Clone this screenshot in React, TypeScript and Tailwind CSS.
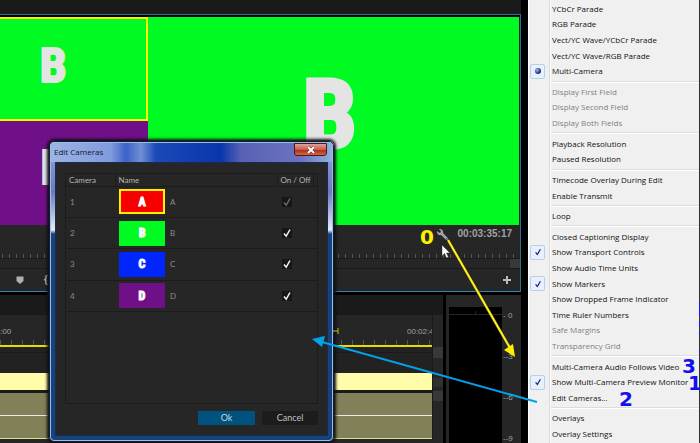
import { FaWrench } from "react-icons/fa";

type MenuEntry = {
  label: string;
  mark?: "check" | "dot";
  disabled?: boolean;
};

const menuGroups: MenuEntry[][] = [
  [
    { label: "YCbCr Parade" },
    { label: "RGB Parade" },
    { label: "Vect/YC Wave/YCbCr Parade" },
    { label: "Vect/YC Wave/RGB Parade" },
    { label: "Multi-Camera", mark: "dot" },
  ],
  [
    { label: "Display First Field", disabled: true },
    { label: "Display Second Field", disabled: true },
    { label: "Display Both Fields", disabled: true },
  ],
  [{ label: "Playback Resolution" }, { label: "Paused Resolution" }],
  [{ label: "Timecode Overlay During Edit" }, { label: "Enable Transmit" }],
  [{ label: "Loop" }],
  [
    { label: "Closed Captioning Display" },
    { label: "Show Transport Controls", mark: "check" },
    { label: "Show Audio Time Units" },
    { label: "Show Markers", mark: "check" },
    { label: "Show Dropped Frame Indicator" },
    { label: "Time Ruler Numbers" },
    { label: "Safe Margins", disabled: true },
    { label: "Transparency Grid", disabled: true },
  ],
  [
    { label: "Multi-Camera Audio Follows Video" },
    { label: "Show Multi-Camera Preview Monitor", mark: "check" },
    { label: "Edit Cameras..." },
  ],
  [{ label: "Overlays" }, { label: "Overlay Settings" }],
];

const cameras = [
  { id: 1, name: "A", tile: "bg-[#f80000] border-2 border-[#fff200]", locked: true },
  { id: 2, name: "B", tile: "bg-[#00fb22]", locked: false },
  { id: 3, name: "C", tile: "bg-[#0026fb]", locked: false },
  { id: 4, name: "D", tile: "bg-[#701088]", locked: false },
];

const heavy =
  "font-['Impact','Noto_Sans_ExtraCondensed','Roboto_Condensed','Open_Sans_Condensed','DejaVu_Sans_Mono',monospace] font-bold text-[#e4e4e4]";

function CheckIcon({ className }: { className: string }) {
  return (
    <svg viewBox="0 0 10 10" className={className} fill="none" stroke="currentColor">
      <path d="M2 5.5 L4.2 8.2 L8 1.5" strokeWidth="1.5" />
    </svg>
  );
}

function Monitor() {
  return (
    <section className="flex flex-col border-y border-r border-b-[#3186b4] border-r-[#2b6f94] border-t-[#2b6f94] bg-[#262626]">
      <div className="grid h-[210px] grid-cols-[2fr_5fr] border-t-2 border-black pr-px">
        <div className="grid grid-rows-2">
          <div className={`${heavy} flex justify-center border-y-2 border-r-2 border-[#fff200] bg-[#00fb22] pr-10 pt-5 text-[48px] leading-[54px] [-webkit-text-stroke:2px_#e4e4e4]`}>
            B
          </div>
          <div className={`${heavy} flex justify-center bg-[#701088] pr-10 pt-5 text-[48px] leading-[54px] [-webkit-text-stroke:2px_#e4e4e4]`}>
            D
          </div>
        </div>
        <div className={`${heavy} flex justify-center bg-[#00fb22] pr-2 pt-12 text-[96px] leading-[100px] [-webkit-text-stroke:4px_#e4e4e4]`}>
          B
        </div>
      </div>

      <div className="flex h-[25px] items-start justify-end gap-[10px] pr-2 pt-1 text-[#a2a2a2]">
        <button aria-label="Settings" className="-scale-x-100">
          <FaWrench size={11} />
        </button>
        <span className="font-['Liberation_Sans',sans-serif] text-[10px] font-bold leading-[10px]">00:03:35:17</span>
      </div>
      <div className="flex h-[9px] items-end border-b border-[#1a1a1a]">
        <div className="h-1 w-full bg-[repeating-linear-gradient(90deg,transparent_0_2px,#555_2px_3px,transparent_3px_7px)]" />
      </div>
      <div className="flex h-[10px] justify-end border-b border-[#1a1a1a]">
        <div className="w-[10px] bg-[#383838]" />
      </div>
      <div className="flex h-[22px] items-center justify-between pl-4 pr-[9px]">
        <div className="flex items-center gap-5">
          <button aria-label="Add marker">
            <svg viewBox="0 0 8 8" className="size-2 fill-[#b0b0b0]">
              <path d="M0.5 0.5 H7.5 V5 L4 8 L0.5 5 Z" />
            </svg>
          </button>
          <button aria-label="Mark in" className="font-['Liberation_Sans',sans-serif] text-[10px] font-bold leading-[10px] text-[#c8c8c8]">
            {"{"}
          </button>
        </div>
        <button aria-label="Button editor">
          <svg viewBox="0 0 8 8" className="size-2" stroke="#bdbdbd" strokeWidth="2">
            <path d="M4 0 V8 M0 4 H8" />
          </svg>
        </button>
      </div>
    </section>
  );
}

function Timeline() {
  return (
    <section className="flex min-w-0 flex-1 flex-col bg-[#262626]">
      <div className="h-5 bg-[#1a1a1a]" />
      <div className="flex">
        <div className="min-w-0 flex-1">
          <div className="flex h-[25px] items-center justify-between overflow-hidden pt-2 font-['Liberation_Sans',sans-serif] text-[8px] leading-[10px] text-[#a2a2a2]">
            <span>:00</span>
            <span className="w-[25px] overflow-hidden">00:02:44</span>
          </div>
          <div className="h-[5px] bg-[repeating-linear-gradient(90deg,#555_0_1px,transparent_1px_11px)]" />
          <div className="h-[2px] bg-[#e6dc00]" />
          <div className="h-[6px] border-b border-[#1a1a1a] bg-[#222]" />
          <div className="h-5 bg-[#222]" />
          <div className="h-[17px] bg-[#fffcaa]" />
          <div className="h-[3px] bg-[#1a1a1a]" />
          <div className="h-[22px] bg-[#828058]" />
          <div className="h-px bg-[#e8e8e0]" />
          <div className="h-[22px] bg-[#828058]" />
          <div className="h-px bg-[#e0dc98]" />
        </div>
        <div className="w-[11px] border-l border-[#1a1a1a] pt-[32px]">
          <div className="h-[11px] bg-[#383838]" />
          <div className="mt-5 h-[9px] bg-[#303030]" />
          <div className="mt-1 h-[10px] bg-[#383838]" />
        </div>
      </div>
    </section>
  );
}

function AudioMeter() {
  return (
    <section className="flex w-[75px] flex-col bg-[#262626] pl-[3px] pt-3">
      <div className="flex flex-1">
        <div className="w-[53px] bg-black pt-1">
          <div className="flex h-1 border-b border-[#262626]">
            <div className="w-1/2 border-r border-[#262626]" />
          </div>
        </div>
        <ul className="font-['Liberation_Sans',sans-serif] text-[8px] leading-[10px] text-[#a2a2a2]">
          {["- 0", "--3", "--6", "--9"].map((mark) => (
            <li key={mark} className="h-[41px] pl-px pt-1 last:h-auto">{mark}</li>
          ))}
        </ul>
      </div>
    </section>
  );
}

function CameraTable() {
  return (
    <div className="h-[231px] border border-[#1c1c1c]">
      <table className="h-[138px] w-full table-fixed border-collapse text-left text-[8px] leading-[12px] text-[#8c8c8c]">
        <thead>
          <tr className="h-[12px] border-b border-[#1c1c1c] text-[#b4b4b4]">
            <th className="w-[49px] border-r border-[#1c1c1c] p-0 pl-[3px] font-normal leading-[10px]">Camera</th>
            <th className="border-r border-[#1c1c1c] p-0 pl-[3px] font-normal leading-[10px]">Name</th>
            <th className="w-[36px] whitespace-nowrap border-r border-[#1c1c1c] p-0 pl-[3px] font-normal leading-[10px]">On / Off</th>
            <th className="w-1 p-0" />
          </tr>
        </thead>
        <tbody>
          {cameras.map((camera) => (
            <tr key={camera.id} className="border-b border-[#1c1c1c]">
              <td className="p-0 pl-1">{camera.id}</td>
              <td className="p-0 pl-1">
                <div className="flex items-center gap-[5px]">
                  <div className={`${heavy} ${camera.tile} flex h-[25px] w-[46px] items-center justify-center text-[12px] leading-[12px] text-white [-webkit-text-stroke:1px_white]`}>
                    {camera.name}
                  </div>
                  <span>{camera.name}</span>
                </div>
              </td>
              <td className="p-0 pl-[5px]" colSpan={2}>
                <div className="relative size-[10px]">
                  <input
                    type="checkbox"
                    defaultChecked
                    disabled={camera.locked}
                    aria-label={`Camera ${camera.name} on`}
                    className="peer block size-[10px] appearance-none bg-[#161616]"
                  />
                  <CheckIcon className="pointer-events-none absolute inset-0 hidden text-[#f4f4f4] peer-checked:block peer-disabled:text-[#6a6a6a]" />
                </div>
              </td>
            </tr>
          ))}
        </tbody>
      </table>
    </div>
  );
}

function EditCamerasDialog() {
  return (
    <div
      role="dialog"
      aria-label="Edit Cameras"
      className="absolute left-[49px] top-[141px] w-[285px] rounded-[5px] border border-[#101c38] bg-[linear-gradient(#8fa6dc,#7078c0_50px,#e8ecf4_88px,#17427c_92px,#17427c)] font-['Lato',sans-serif] shadow-[0_0_3px_2px_#101010]"
    >
      <div className="rounded-[4px] border border-[#9cbce8] px-1 pb-1">
        <div className="-mx-1 flex h-[19px] items-start justify-between rounded-t-[3px] bg-[linear-gradient(90deg,#9cb4e4,#7f9bdc_60px,#3c62c8_75px,#6f90d4_90px,#1c48b8_105px,#0a36ac_170px,#5860b4_190px,#6c74c0_250px,#8fb0e0)] pl-[3px] pr-[5px]">
          <h2 className="pt-[3px] font-['Open_Sans',sans-serif] text-[8px] leading-[12px] text-[#101828]">Edit Cameras</h2>
          <button
            aria-label="Close"
            className="flex h-[13px] w-[33px] items-center justify-center rounded-b-[3px] border border-[#501810] bg-[linear-gradient(#e0a098,#c86050_50%,#a82818_50%,#d06848)]"
          >
            <svg viewBox="0 0 8 8" className="size-2" fill="none">
              <path d="M1 1 L7 7 M7 1 L1 7" stroke="#702018" strokeWidth="3" />
              <path d="M1 1 L7 7 M7 1 L1 7" stroke="#fff" strokeWidth="2" />
            </svg>
          </button>
        </div>
        <div className="border border-[#182c50] bg-[#262626] px-[9px] pb-[10px] pt-[10px]">
          <CameraTable />
          <div className="flex justify-end gap-[7px] pt-[7px] text-[9px] leading-[14px]">
            <button className="h-[14px] w-[57px] bg-[#00527f] text-[#c8d4dc]">Ok</button>
            <button className="h-[14px] w-[56px] bg-[#1c1c1c] text-[#c0c0c0]">Cancel</button>
          </div>
        </div>
      </div>
    </div>
  );
}

function PanelMenu() {
  return (
    <div
      role="menu"
      className="flex min-h-screen w-[171px] flex-col border-l border-white bg-[linear-gradient(90deg,#f0f0f0_20px,#dcdcdc_20px_21px,#fafafa_21px_22px,#f0f0f0_22px)] py-px font-['Open_Sans',sans-serif] text-[8px] text-[#101010]"
    >
      {menuGroups.map((group, index) => (
        <div key={group[0].label} className="contents">
          {index > 0 && (
            <div className="flex h-[5px] items-center pl-[22px]">
              <div className="h-[2px] w-full border-b border-white bg-[#dcdcdc]" />
            </div>
          )}
          {group.map((entry) => (
            <button
              key={entry.label}
              role="menuitem"
              disabled={entry.disabled}
              className="flex min-h-[15px] flex-1 items-center gap-[7px] whitespace-nowrap pl-px leading-[12px] disabled:text-[#808080]"
            >
              <span
                className={
                  entry.mark
                    ? "flex size-[15px] shrink-0 items-center justify-center rounded-[2px] border border-[#b4cff0] bg-[#e8f0fa] text-[#101c98]"
                    : "size-[15px] shrink-0"
                }
              >
                {entry.mark === "check" && <CheckIcon className="size-2" />}
                {entry.mark === "dot" && (
                  <span className="size-[6px] rounded-full bg-[radial-gradient(circle_at_35%_35%,#b0b8f0,#282c88_60%)]" />
                )}
              </span>
              {entry.label}
            </button>
          ))}
        </div>
      ))}
    </div>
  );
}

function Annotations() {
  return (
    <div className="pointer-events-none absolute inset-0 overflow-hidden font-['DejaVu_Sans',sans-serif] text-[20px] font-bold leading-[20px] text-[#1010f0]">
      <svg width="700" height="443" viewBox="0 0 700 443" className="absolute left-0 top-0">
        <path d="M333 331 H338 M338 328 V334" stroke="#c8b800" />
        <path d="M448 240 L510 348" stroke="#504800" strokeWidth="3" />
        <path d="M448 240 L510 348" stroke="#fff02a" strokeWidth="2" />
        <path d="M515 357 L504 350 L513 344 Z" fill="#fff000" />
        <path d="M537 402 L322 342" stroke="#00a2ea" strokeWidth="2" />
        <path d="M312 339 L325 336 L322 347 Z" fill="#00a2ea" />
        <path d="M442 245 V256 L444.5 253.5 L446.5 258 L448.5 257 L446.5 253 H450 Z" fill="#fff" stroke="#333" strokeWidth="0.5" />
        <path d="M699.5 303 V316 M699.5 321 V327 M699.5 332 V334 M699.5 351 V353" stroke="#1010f0" />
      </svg>
      <span className="absolute left-[420px] top-[227px] text-[#fff200]">0</span>
      <span className="absolute left-[619px] top-[389px]">2</span>
      <span className="absolute left-[682px] top-[356px]">3</span>
      <span className="absolute left-[688px] top-[373px]">1</span>
    </div>
  );
}

export default function App() {
  return (
    <main className="relative flex min-h-screen overflow-hidden bg-black">
      <div className="flex min-w-0 flex-1 flex-col">
        <div className="h-[14px] bg-[#1a1a1a]" />
        <Monitor />
        <div className="flex flex-1 gap-[3px] pt-[3px]">
          <Timeline />
          <AudioMeter />
        </div>
      </div>
      <div className="border-r border-[#303030] pl-[7px]">
        <PanelMenu />
      </div>
      <EditCamerasDialog />
      <Annotations />
    </main>
  );
}
